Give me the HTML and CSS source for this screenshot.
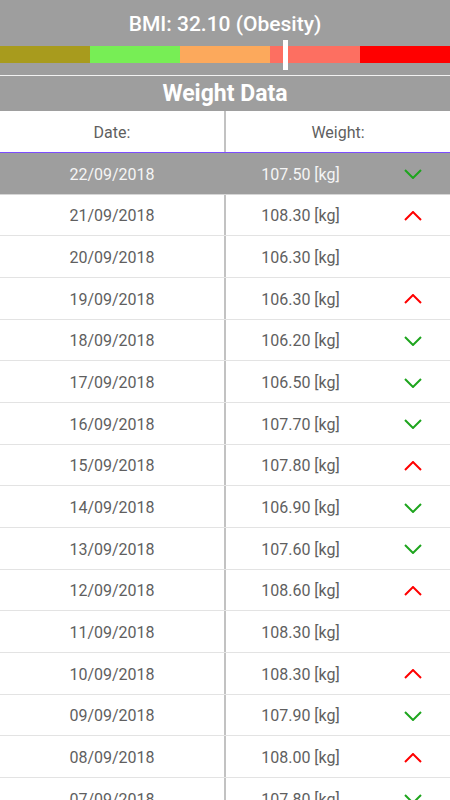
FILE: index.html
```html
<!DOCTYPE html>
<html>
<head>
<meta charset="utf-8">
<link rel="stylesheet" href="styles.css">
</head>
<body>
<div class="top">
  <div class="bmi-title">BMI: 32.10 (Obesity)</div>
  <div class="bar">
    <div class="seg s1"></div>
    <div class="seg s2"></div>
    <div class="seg s3"></div>
    <div class="seg s4"></div>
    <div class="seg s5"></div>
    <div class="marker"></div>
  </div>
</div>
<div class="section-title">Weight Data</div>
<div class="table">
  <div class="row head">
    <div class="cell date">Date:</div>
    <div class="cell wcol">Weight:</div>
  </div>
  <div class="row selected">
    <div class="cell date">22/09/2018</div>
    <div class="cell wcol"><span class="w">107.50 [kg]</span><span class="arrow"><svg viewBox="0 0 18 10" width="18" height="10"><polyline class="down" points="1,1 9,9 17,1"/></svg></span></div>
  </div>
  <div class="row">
    <div class="cell date">21/09/2018</div>
    <div class="cell wcol"><span class="w">108.30 [kg]</span><span class="arrow"><svg viewBox="0 0 18 10" width="18" height="10"><polyline class="up" points="1,9 9,1 17,9"/></svg></span></div>
  </div>
  <div class="row">
    <div class="cell date">20/09/2018</div>
    <div class="cell wcol"><span class="w">106.30 [kg]</span><span class="arrow"></span></div>
  </div>
  <div class="row">
    <div class="cell date">19/09/2018</div>
    <div class="cell wcol"><span class="w">106.30 [kg]</span><span class="arrow"><svg viewBox="0 0 18 10" width="18" height="10"><polyline class="up" points="1,9 9,1 17,9"/></svg></span></div>
  </div>
  <div class="row">
    <div class="cell date">18/09/2018</div>
    <div class="cell wcol"><span class="w">106.20 [kg]</span><span class="arrow"><svg viewBox="0 0 18 10" width="18" height="10"><polyline class="down" points="1,1 9,9 17,1"/></svg></span></div>
  </div>
  <div class="row">
    <div class="cell date">17/09/2018</div>
    <div class="cell wcol"><span class="w">106.50 [kg]</span><span class="arrow"><svg viewBox="0 0 18 10" width="18" height="10"><polyline class="down" points="1,1 9,9 17,1"/></svg></span></div>
  </div>
  <div class="row">
    <div class="cell date">16/09/2018</div>
    <div class="cell wcol"><span class="w">107.70 [kg]</span><span class="arrow"><svg viewBox="0 0 18 10" width="18" height="10"><polyline class="down" points="1,1 9,9 17,1"/></svg></span></div>
  </div>
  <div class="row">
    <div class="cell date">15/09/2018</div>
    <div class="cell wcol"><span class="w">107.80 [kg]</span><span class="arrow"><svg viewBox="0 0 18 10" width="18" height="10"><polyline class="up" points="1,9 9,1 17,9"/></svg></span></div>
  </div>
  <div class="row">
    <div class="cell date">14/09/2018</div>
    <div class="cell wcol"><span class="w">106.90 [kg]</span><span class="arrow"><svg viewBox="0 0 18 10" width="18" height="10"><polyline class="down" points="1,1 9,9 17,1"/></svg></span></div>
  </div>
  <div class="row">
    <div class="cell date">13/09/2018</div>
    <div class="cell wcol"><span class="w">107.60 [kg]</span><span class="arrow"><svg viewBox="0 0 18 10" width="18" height="10"><polyline class="down" points="1,1 9,9 17,1"/></svg></span></div>
  </div>
  <div class="row">
    <div class="cell date">12/09/2018</div>
    <div class="cell wcol"><span class="w">108.60 [kg]</span><span class="arrow"><svg viewBox="0 0 18 10" width="18" height="10"><polyline class="up" points="1,9 9,1 17,9"/></svg></span></div>
  </div>
  <div class="row">
    <div class="cell date">11/09/2018</div>
    <div class="cell wcol"><span class="w">108.30 [kg]</span><span class="arrow"></span></div>
  </div>
  <div class="row">
    <div class="cell date">10/09/2018</div>
    <div class="cell wcol"><span class="w">108.30 [kg]</span><span class="arrow"><svg viewBox="0 0 18 10" width="18" height="10"><polyline class="up" points="1,9 9,1 17,9"/></svg></span></div>
  </div>
  <div class="row">
    <div class="cell date">09/09/2018</div>
    <div class="cell wcol"><span class="w">107.90 [kg]</span><span class="arrow"><svg viewBox="0 0 18 10" width="18" height="10"><polyline class="down" points="1,1 9,9 17,1"/></svg></span></div>
  </div>
  <div class="row">
    <div class="cell date">08/09/2018</div>
    <div class="cell wcol"><span class="w">108.00 [kg]</span><span class="arrow"><svg viewBox="0 0 18 10" width="18" height="10"><polyline class="up" points="1,9 9,1 17,9"/></svg></span></div>
  </div>
  <div class="row">
    <div class="cell date">07/09/2018</div>
    <div class="cell wcol"><span class="w">107.80 [kg]</span><span class="arrow"><svg viewBox="0 0 18 10" width="18" height="10"><polyline class="down" points="1,1 9,9 17,1"/></svg></span></div>
  </div>
</div>
</body>
</html>
```
FILE: styles.css
```css
html, body {
  margin: 0;
  padding: 0;
  background: #ffffff;
  font-family: Roboto, "Liberation Sans", sans-serif;
  width: 450px;
  height: 800px;
  overflow: hidden;
}

.top {
  background: #9e9e9e;
  height: 75px;
  border-bottom: 1px solid #f2f2f2;
}

.bmi-title {
  padding-top: 12px;
  line-height: 25px;
  font-size: 21px;
  font-weight: 500;
  color: #ffffff;
  text-align: center;
}

.bar {
  position: relative;
  margin-top: 9px;
  height: 17px;
  display: flex;
}

.seg { flex: 1; }
.s1 { background: #a89b1d; }
.s2 { background: #77ee55; }
.s3 { background: #fca95c; }
.s4 { background: #fd6f61; }
.s5 { background: #ff0000; }

.marker {
  position: absolute;
  left: 283px;
  top: -6px;
  width: 5px;
  height: 30px;
  background: #ffffff;
}

.section-title {
  background: #9e9e9e;
  height: 35px;
  line-height: 35px;
  font-size: 23px;
  font-weight: 700;
  color: #ffffff;
  text-align: center;
}

.row {
  display: flex;
  height: 41.67px;
  box-sizing: border-box;
  border-bottom: 1px solid #e3e3e3;
  font-size: 16px;
  color: #5f5f5f;
}

.row.head {
  height: 42px;
  border-bottom: 1px solid #7c4dff;
}

.row.selected {
  background: #9e9e9e;
  color: #f5f5f5;
  border-bottom: 1px solid #d6d6d6;
}

.cell {
  display: flex;
  align-items: center;
  justify-content: center;
  padding-top: 2px;
}

.date {
  width: 224px;
  border-right: 2px solid #c2c2c2;
}

.row.selected .date {
  border-right-color: #9e9e9e;
}

.wcol {
  flex: 1;
}

.w {
  flex: 0 0 149px;
  text-align: center;
}

.arrow {
  flex: 1;
  display: flex;
  justify-content: center;
  align-items: center;
}

.arrow svg { display: block; }

polyline {
  fill: none;
  stroke-width: 2;
}

.down { stroke: #1ea51e; }
.up { stroke: #ff0000; }
```
